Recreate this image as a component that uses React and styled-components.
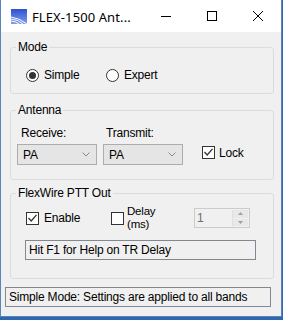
import styled, { createGlobalStyle } from "styled-components"

const GlobalStyle = createGlobalStyle`
  html, body {
    margin: 0;
    padding: 0;
  }
  body {
    background: #2f66b0;
    width: 283px;
    height: 320px;
    overflow: hidden;
  }
`

const Window = styled.div`
  width: 280px;
  height: 316px;
  border: 1px solid #5b84bb;
  border-top: none;
  background: #f0f0f0;
  display: flex;
  flex-direction: column;
  font-family: "Liberation Sans", Arial, sans-serif;
  font-size: 12px;
  letter-spacing: -0.2px;
  color: #000;
`

const TitleBar = styled.div`
  height: 32px;
  background: #fff;
  display: flex;
  align-items: center;
  padding-left: 10px;
`

const Title = styled.div`
  flex: 1;
  margin-left: 5px;
  font-family: "Noto Sans", "Liberation Sans", sans-serif;
  font-size: 13px;
  letter-spacing: 0.1px;
  padding-top: 1px;
`

const CaptionButton = styled.div`
  width: 46px;
  height: 32px;
  display: flex;
  align-items: center;
  justify-content: center;
`

const Content = styled.div`
  padding-top: 8px;
  display: flex;
  flex-direction: column;
`

const Group = styled.fieldset`
  margin: ${(p) => p.$top || 0}px 7px 0 9px;
  padding: 0;
  border: 1px solid #dcdcdc;
  border-radius: 3px;
  min-inline-size: 0;
`

const Legend = styled.legend`
  margin-left: 5px;
  padding: 0 2px;
  line-height: 14px;
`

const Row = styled.div`
  display: flex;
  align-items: center;
  height: ${(p) => p.$h || 14}px;
  padding: ${(p) => p.$pad};
`

const Option = styled.label`
  display: flex;
  align-items: center;
  width: ${(p) => (p.$w ? p.$w + "px" : "auto")};
  gap: ${(p) => p.$gap || 5}px;
  line-height: 14px;
`

const RadioCircle = styled.span`
  width: 11px;
  height: 11px;
  border: 1px solid #333;
  border-radius: 50%;
  background: #fff;
  display: flex;
  align-items: center;
  justify-content: center;
  flex-shrink: 0;
  &::after {
    content: "";
    width: 7px;
    height: 7px;
    border-radius: 50%;
    background: ${(p) => (p.$on ? "#333" : "transparent")};
  }
`

const CheckBox = styled.span`
  width: 11px;
  height: 11px;
  border: 1px solid #333;
  background: #fff;
  flex-shrink: 0;
  display: flex;
  svg {
    display: block;
  }
`

const Column = styled.div`
  display: flex;
  flex-direction: column;
  width: 80px;
`

const FieldLabel = styled.div`
  line-height: 14px;
  margin-left: ${(p) => p.$ml || 4}px;
  margin-bottom: 4px;
`

const Combo = styled.div`
  height: 19px;
  border: 1px solid #acacac;
  background: #e5e5e5;
  display: flex;
  align-items: center;
  justify-content: space-between;
  padding: 0 6px 0 5px;
`

const ComboRow = styled.div`
  display: flex;
  align-items: flex-end;
  gap: 6px;
  padding: 9px 0 14px 6px;
`

const LockWrap = styled.div`
  height: 21px;
  display: flex;
  align-items: center;
  margin-left: 13px;
  padding-bottom: 2px;
`

const TwoLine = styled.span`
  font-size: 11.5px;
  line-height: 13px;
  margin-top: -1px;
`

const Spinner = styled.div`
  width: 54px;
  height: 18px;
  border: 1px solid #cccccc;
  background: #f0f0f0;
  display: flex;
  align-items: center;
  color: #6d6d6d;
`

const SpinValue = styled.span`
  flex: 1;
  padding-left: 2px;
`

const SpinButtons = styled.div`
  width: 15px;
  height: 16px;
  margin-right: 1px;
  display: flex;
  flex-direction: column;
  border-left: 1px solid #e0e0e0;
`

const SpinHalf = styled.div`
  flex: 1;
  display: flex;
  align-items: center;
  justify-content: center;
  background: #e8e8e8;
  & + & {
    border-top: 1px solid #f0f0f0;
  }
`

const ReadBox = styled.div`
  height: 18px;
  border: 1px solid #828790;
  background: #f0f0f0;
  display: flex;
  align-items: center;
  padding-left: 3px;
  margin: ${(p) => p.$margin};
  width: ${(p) => p.$w}px;
`

const Chevron = () => (
  <svg width="8" height="5" viewBox="0 0 8 5">
    <polyline points="0.5,0.5 4,4 7.5,0.5" fill="none" stroke="#8a8a8a" strokeWidth="1" />
  </svg>
)

const Tick = () => (
  <svg width="11" height="11" viewBox="0 0 11 11">
    <polyline points="1.5,5 4.2,8 9.5,1.8" fill="none" stroke="#333" strokeWidth="1.3" />
  </svg>
)

const Check = ({ on }) => <CheckBox>{on && <Tick />}</CheckBox>

const AppIcon = () => (
  <svg width="16" height="15" viewBox="0 0 16 15">
    <defs>
      <linearGradient id="ic" x1="0" y1="0" x2="0" y2="1">
        <stop offset="0" stopColor="#2f4fd0" />
        <stop offset="1" stopColor="#7f9ef0" />
      </linearGradient>
    </defs>
    <rect x="0" y="0" width="16" height="15" fill="url(#ic)" />
    <path d="M0 8 Q8 9 16 15" stroke="#fff" strokeWidth="1" fill="none" />
    <path d="M0 10 Q7 10.5 12 15" stroke="#fff" strokeWidth="1" fill="none" />
    <path d="M0 12 Q5 12.5 8 15" stroke="#fff" strokeWidth="1" fill="none" />
  </svg>
)

const App = () => {
  return (
    <>
      <GlobalStyle />
      <Window>
        <TitleBar>
          <AppIcon />
          <Title>FLEX-1500 Ant...</Title>
          <CaptionButton>
            <svg width="10" height="10" viewBox="0 0 10 10">
              <line x1="0" y1="5.5" x2="10" y2="5.5" stroke="#000" strokeWidth="1" />
            </svg>
          </CaptionButton>
          <CaptionButton>
            <svg width="10" height="10" viewBox="0 0 10 10">
              <rect x="0.5" y="0.5" width="9" height="9" fill="none" stroke="#000" strokeWidth="1" />
            </svg>
          </CaptionButton>
          <CaptionButton>
            <svg width="10" height="10" viewBox="0 0 10 10">
              <path d="M0 0 L10 10 M10 0 L0 10" stroke="#000" strokeWidth="1" />
            </svg>
          </CaptionButton>
        </TitleBar>

        <Content>
          <Group>
            <Legend>Mode</Legend>
            <Row $pad="14px 0 11px 15px">
              <Option $w={80}>
                <RadioCircle $on />
                Simple
              </Option>
              <Option>
                <RadioCircle />
                Expert
              </Option>
            </Row>
          </Group>

          <Group $top={9}>
            <Legend>Antenna</Legend>
            <ComboRow>
              <Column>
                <FieldLabel $ml={4}>Receive:</FieldLabel>
                <Combo>
                  PA
                  <Chevron />
                </Combo>
              </Column>
              <Column>
                <FieldLabel $ml={3}>Transmit:</FieldLabel>
                <Combo>
                  PA
                  <Chevron />
                </Combo>
              </Column>
              <LockWrap>
                <Option $gap={4}>
                  <Check on />
                  Lock
                </Option>
              </LockWrap>
            </ComboRow>
          </Group>

          <Group $top={6}>
            <Legend>FlexWire PTT Out</Legend>
            <Row $h={24} $pad="6px 0 0 15px">
              <Option $w={85} $gap={5}>
                <Check on />
                Enable
              </Option>
              <Option $w={83} $gap={3}>
                <Check />
                <TwoLine>
                  Delay
                  <br />
                  (ms)
                </TwoLine>
              </Option>
              <Spinner>
                <SpinValue>1</SpinValue>
                <SpinButtons>
                  <SpinHalf>
                    <svg width="5" height="3" viewBox="0 0 5 3">
                      <polygon points="0,3 2.5,0 5,3" fill="#a0a0a0" />
                    </svg>
                  </SpinHalf>
                  <SpinHalf>
                    <svg width="5" height="3" viewBox="0 0 5 3">
                      <polygon points="0,0 2.5,3 5,0" fill="#a0a0a0" />
                    </svg>
                  </SpinHalf>
                </SpinButtons>
              </Spinner>
            </Row>
            <ReadBox $w={226} $margin="10px 0 18px 14px">Hit F1 for Help on TR Delay</ReadBox>
          </Group>

          <ReadBox $w={261} $margin="8px 0 0 4px">Simple Mode: Settings are applied to all bands</ReadBox>
        </Content>
      </Window>
    </>
  )
}

export default App
